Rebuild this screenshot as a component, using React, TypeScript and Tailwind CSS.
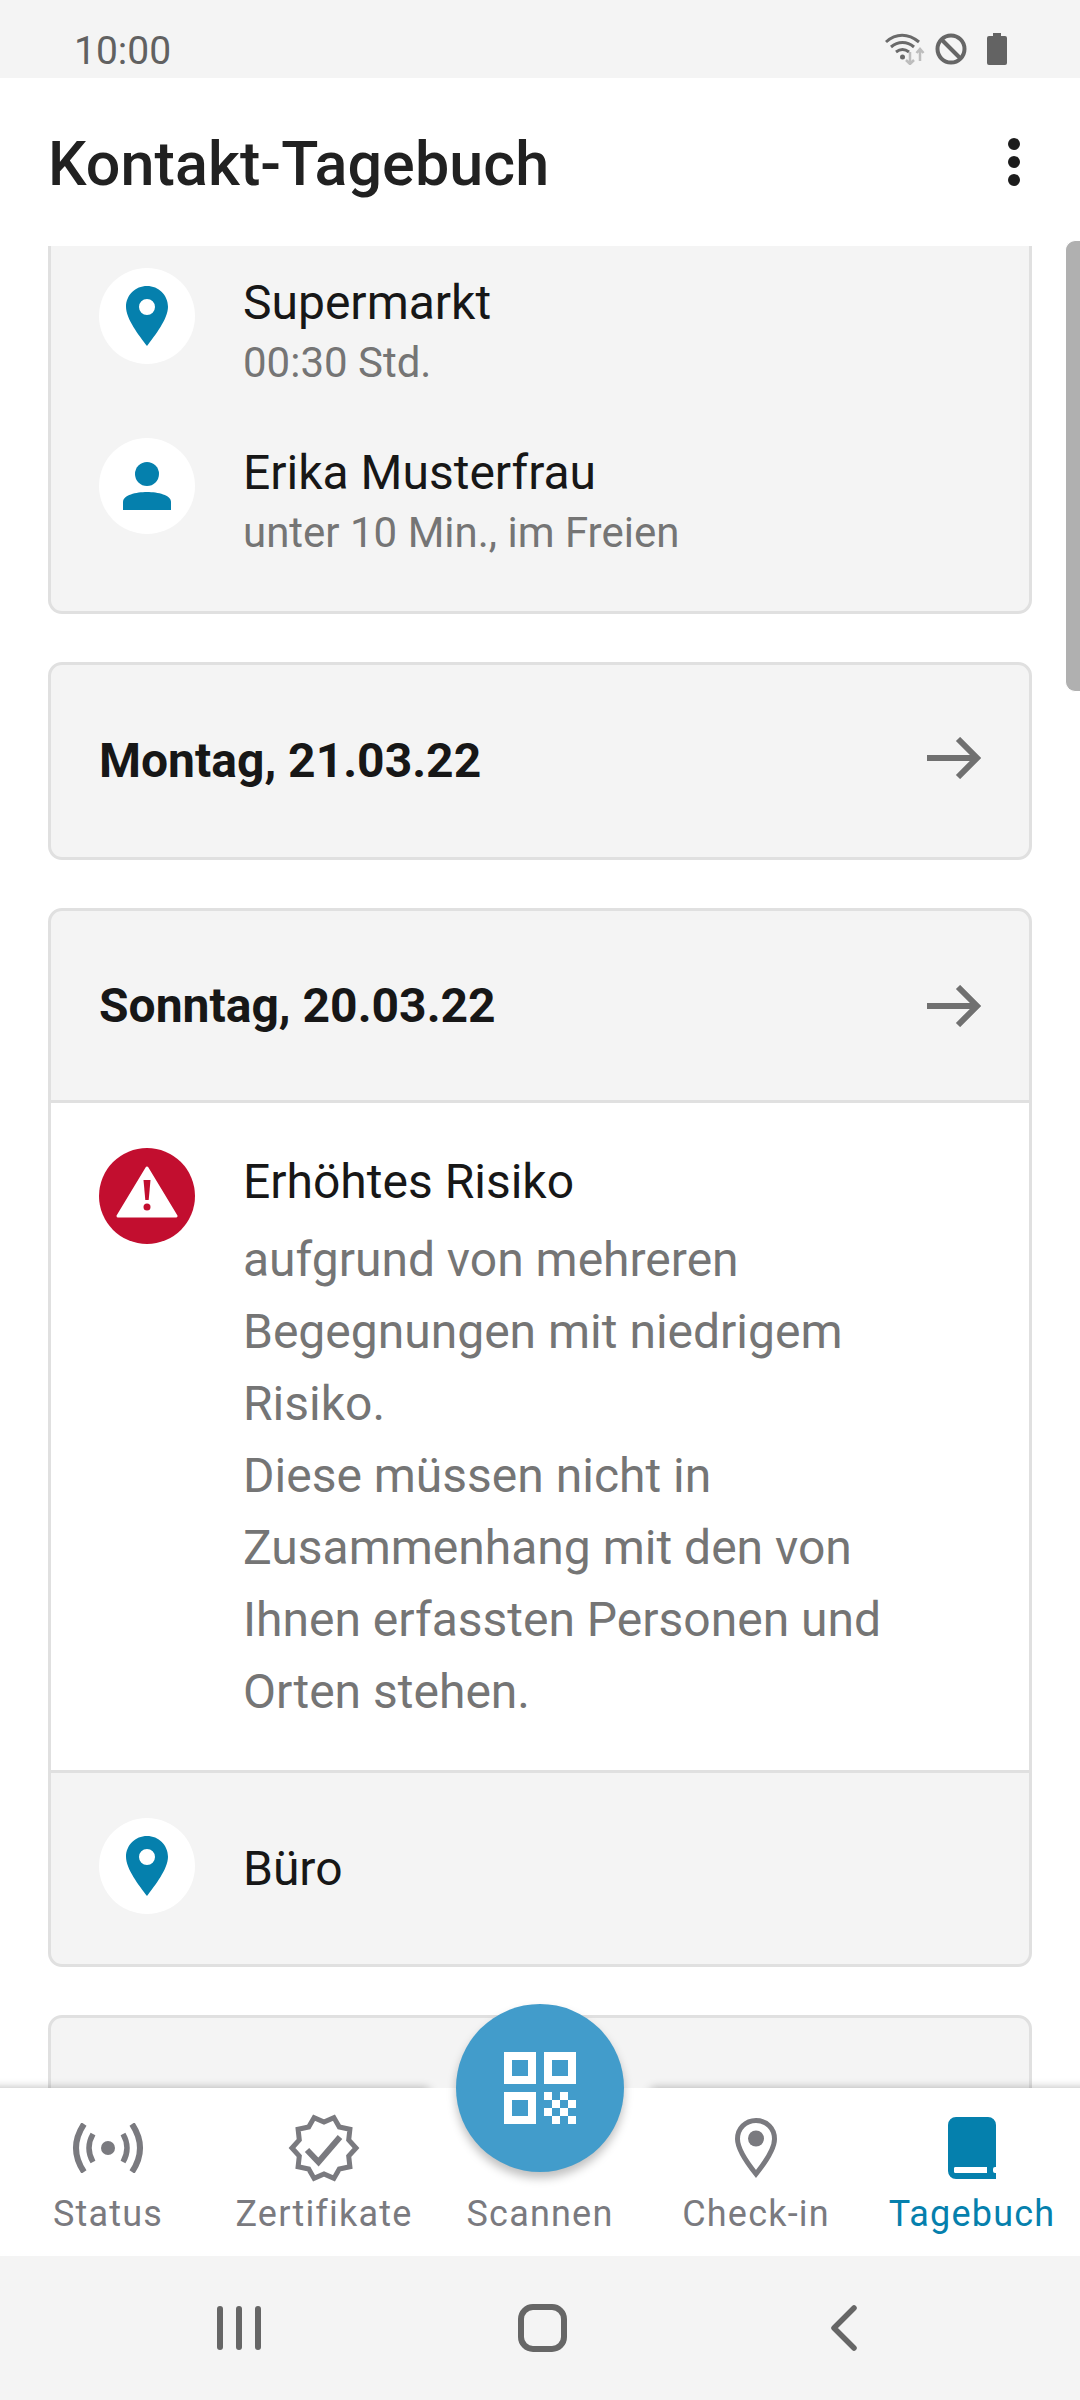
function Pin({ className = "" }: { className?: string }) {
  return (
    <svg viewBox="0 0 42 60" className={className}>
      <path fill="#0580ad" fillRule="evenodd" d="M21 0C9.400 0 0 9.200 0 20.800 0 33 13 49.500 21 60c8-10.500 21-27 21-39.200C42 9.200 32.600 0 21 0Zm0 13a8 8 0 1 1 0 16 8 8 0 0 1 0-16Z" />
    </svg>
  );
}

function Circle({ children, bg = "bg-white" }: { children: React.ReactNode; bg?: string }) {
  return <div className={`flex h-[96px] w-[96px] shrink-0 items-center justify-center rounded-full ${bg}`}>{children}</div>;
}

function Person() {
  return (
    <svg viewBox="0 0 48 48" className="h-[48px] w-[48px]">
      <circle cx="24" cy="12" r="12" fill="#0580ad" />
      <path fill="#0580ad" d="M0 48v-8c0-7 13-10 24-10s24 3 24 10v8Z" />
    </svg>
  );
}

function Arrow({ className = "" }: { className?: string }) {
  return (
    <svg viewBox="0 0 54 42" className={`h-[42px] w-[54px] ${className}`} fill="none" stroke="#707070" strokeWidth="6">
      <path d="M0 21h50M31 2l19 19-19 19" />
    </svg>
  );
}

function DayHeader({ title, h, arrowClass }: { title: string; h: string; arrowClass?: string }) {
  return (
    <div className={`flex items-center justify-between pl-[48px] pr-[48px] ${h}`}>
      <span className="text-[48px] font-bold text-[#171717]">{title}</span>
      <Arrow className={arrowClass} />
    </div>
  );
}

function Nav({ label, active, children }: { label: string; active?: boolean; children?: React.ReactNode }) {
  return (
    <div className="flex flex-1 flex-col items-center">
      <div className="flex h-[72px] w-[72px] items-center justify-center">{children}</div>
      <span className={`mt-[8px] text-[36px] leading-[44px] tracking-[1.2px] ${active ? "text-[#0580ad]" : "text-[#7a7a7f]"}`}>{label}</span>
    </div>
  );
}

const qrCells = [
  [0, 0], [2, 0], [1, 1], [3, 1], [0, 2], [2, 2], [1, 3], [3, 3],
];

const badgePoints = Array.from({ length: 20 }, (_, i) => {
  const a = (i * Math.PI) / 10;
  const r = i % 2 === 0 ? 32 : 26;
  return `${(36 + r * Math.cos(a)).toFixed(1)},${(34 + r * Math.sin(a)).toFixed(1)}`;
}).join(" ");

function Row({ icon, title, sub, className = "" }: { icon: React.ReactNode; title: string; sub: string; className?: string }) {
  return (
    <div className={`flex items-start gap-[48px] ${className}`}>
      <Circle>{icon}</Circle>
      <div className="mt-[5px]">
        <div className="text-[48px] leading-[60px] text-[#171717]">{title}</div>
        <div className="text-[42px] leading-[60px] text-[#757575]">{sub}</div>
      </div>
    </div>
  );
}

function NavShadow({ side }: { side: "left" | "right" }) {
  return (
    <div className={`absolute top-[2072px] h-[16px] w-[450px] overflow-hidden ${side === "left" ? "left-0" : "left-[630px]"}`}>
      <div className={`mt-[16px] h-[10px] rounded-full bg-black/30 shadow-[0_0_10px_rgba(0,0,0,0.3)] ${side === "left" ? "-ml-[30px] w-[460px]" : "ml-[20px] w-[470px]"}`} />
    </div>
  );
}

export default function App() {
  return (
    <div className="relative flex h-[2400px] w-[1080px] flex-col overflow-hidden bg-white font-['Roboto',sans-serif]">
      {/* status bar */}
      <div className="flex h-[78px] shrink-0 items-center justify-between bg-[#f4f4f4] pl-[74px] pr-[73px] pt-[20px]">
        <span className="pt-[4px] text-[39px] leading-none text-[#616161]">10:00</span>
        <div className="flex items-center">
          <svg viewBox="0 0 40 32" className="h-[32px] w-[40px]" fill="none">
            <path stroke="#6a6a6a" strokeWidth="3" d="M1 9c10-9 22-9 33 0M6 14c7-6 16-6 23 0M11 19c4-3 9-3 13 0" />
            <circle cx="17.500" cy="24" r="2.500" fill="#6a6a6a" />
            <path stroke="#bdbdbd" strokeWidth="2.500" d="M25 19v12M21 27l4 4 4-4M35 28V16M31.500 20l3.500-4 3.500 4" />
          </svg>
          <svg viewBox="0 0 32 32" className="ml-[10px] h-[32px] w-[32px]" fill="none" stroke="#666" strokeWidth="4">
            <circle cx="16" cy="16" r="13.500" />
            <path d="M6.500 6.500l19 19" />
          </svg>
          <svg viewBox="0 0 20 32" className="ml-[20px] h-[32px] w-[20px]">
            <path fill="#636363" d="M6 0h8v3h4a2 2 0 0 1 2 2v25a2 2 0 0 1-2 2H2a2 2 0 0 1-2-2V5a2 2 0 0 1 2-2h4Z" />
          </svg>
        </div>
      </div>

      {/* app bar */}
      <div className="flex h-[168px] shrink-0 items-center justify-between bg-white pl-[48px] pr-[60px]">
        <span className="pt-[4px] text-[61px] font-medium leading-none tracking-[0.1px] text-[#212121]">Kontakt-Tagebuch</span>
        <div className="flex flex-col gap-[6px]">
          <div className="h-[12px] w-[12px] rounded-full bg-[#1c1c1c]" />
          <div className="h-[12px] w-[12px] rounded-full bg-[#1c1c1c]" />
          <div className="h-[12px] w-[12px] rounded-full bg-[#1c1c1c]" />
        </div>
      </div>

      {/* scrolling list */}
      <div className="flex min-h-0 flex-1 flex-col gap-[48px] overflow-hidden px-[48px]">
        <div className="h-[368px] shrink-0 rounded-b-[14px] border-x-[3px] border-b-[3px] border-[#e0e0e0] bg-[#f4f4f4] px-[48px] pt-[22px]">
          <Row icon={<Pin className="h-[60px] w-[42px]" />} title="Supermarkt" sub="00:30 Std." />
          <Row className="mt-[45px]" icon={<Person />} title="Erika Musterfrau" sub="unter 10 Min., im Freien" />
        </div>

        <div className="shrink-0 rounded-[14px] border-[3px] border-[#e0e0e0] bg-[#f4f4f4]">
          <DayHeader title="Montag, 21.03.22" h="h-[192px]" arrowClass="mb-[7px]" />
        </div>

        <div className="shrink-0 overflow-hidden rounded-[14px] border-[3px] border-[#e0e0e0] bg-[#f4f4f4]">
          <DayHeader title="Sonntag, 20.03.22" h="h-[189px]" />
          <div className="flex h-[673px] items-start gap-[48px] border-y-[3px] border-[#e0e0e0] bg-white px-[48px] pt-[45px]">
            <Circle bg="bg-[#c20e2f]">
              <svg viewBox="0 0 62 52" className="-mt-[8px] h-[52px] w-[62px]">
                <path fill="#fff" stroke="#fff" strokeWidth="3" strokeLinejoin="round" d="M31 2 60 50H2Z" />
                <path fill="#c20e2f" d="M27.500 14h7l-1.800 20h-3.400Z" />
                <circle cx="31" cy="41" r="3.500" fill="#c20e2f" />
              </svg>
            </Circle>
            <div className="mt-[4px]">
              <div className="text-[48px] leading-[60px] text-[#171717]">Erhöhtes Risiko</div>
              <div className="mt-[12px] w-[680px] text-[48px] leading-[72px] text-[#757575]">
                aufgrund von mehreren<br />Begegnungen mit niedrigem<br />Risiko.<br />Diese müssen nicht in<br />Zusammenhang mit den von<br />Ihnen erfassten Personen und<br />Orten stehen.
              </div>
            </div>
          </div>
          <div className="flex h-[191px] items-center gap-[48px] px-[48px]">
            <div className="-mt-[5px]">
              <Circle><Pin className="h-[60px] w-[42px]" /></Circle>
            </div>
            <span className="text-[48px] text-[#171717]">Büro</span>
          </div>
        </div>

        <div className="h-[200px] shrink-0 rounded-[14px] border-[3px] border-[#e0e0e0] bg-[#f4f4f4]" />
      </div>

      {/* bottom navigation */}
      <div className="flex h-[168px] shrink-0 bg-white pt-[24px]">
        <Nav label="Status">
          <svg viewBox="0 0 72 50" className="h-[50px] w-[72px]" fill="none" stroke="#7a7a7f">
            <circle cx="36" cy="25" r="7" fill="#7a7a7f" stroke="none" />
            <path strokeWidth="6" d="M12 1Q-4 25 12 49M60 1Q76 25 60 49" />
            <path strokeWidth="5.500" d="M21 11Q13 25 21 39M51 11Q59 25 51 39" />
          </svg>
        </Nav>
        <Nav label="Zertifikate">
          <svg viewBox="0 0 72 68" className="h-[68px] w-[72px]" fill="none" stroke="#7a7a7f" strokeWidth="5">
            <polygon points={badgePoints} />
            <path strokeWidth="6" d="M19 36l11.500 12L52 23" />
          </svg>
        </Nav>
        <Nav label="Scannen" />
        <Nav label="Check-in">
          <svg viewBox="0 0 42 60" className="h-[60px] w-[42px]">
            <path fill="none" stroke="#7a7a7f" strokeWidth="5" d="M21 2.500C10.500 2.500 2.500 10.500 2.500 21c0 10.500 10.500 25 18.500 35 8-10 18.500-24.500 18.500-35C39.500 10.500 31.500 2.500 21 2.500Z" />
            <circle cx="21" cy="20.500" r="8" fill="#7a7a7f" />
          </svg>
        </Nav>
        <Nav label="Tagebuch" active>
          <svg viewBox="0 0 48 62" className="h-[62px] w-[48px]">
            <path fill="#0580ad" fillRule="evenodd" d="M8 0h32a8 8 0 0 1 8 8v42h-1a2 2 0 0 0-2 2v2a2 2 0 0 0 2 2h1v6H8a8 8 0 0 1-8-8V8a8 8 0 0 1 8-8Zm-1 50a1.500 1.500 0 0 0-1 1.500v3a1.500 1.500 0 0 0 1 1.500h32v-6Z" />
          </svg>
        </Nav>
      </div>

      {/* system navigation */}
      <div className="flex h-[144px] shrink-0 items-center bg-[#f4f4f4] pl-[217px]">
        <div className="flex gap-[13px]">
          <div className="h-[44px] w-[6px] rounded-full bg-[#666]" />
          <div className="h-[44px] w-[6px] rounded-full bg-[#666]" />
          <div className="h-[44px] w-[6px] rounded-full bg-[#666]" />
        </div>
        <div className="ml-[257px] h-[48px] w-[49px] rounded-[15px] border-[6px] border-[#666]" />
        <svg viewBox="0 0 26 46" className="ml-[264px] h-[46px] w-[26px]" fill="none" stroke="#666" strokeWidth="5.500" strokeLinecap="round" strokeLinejoin="round">
          <path d="M23 3 3 23l20 20" />
        </svg>
      </div>

      {/* overlays */}
      <NavShadow side="left" />
      <NavShadow side="right" />
      <div className="absolute left-[456px] top-[2004px] flex h-[168px] w-[168px] items-center justify-center rounded-full bg-[#429ccb] shadow-[0_6px_10px_rgba(0,0,0,0.25)]">
        <svg viewBox="0 0 72 72" className="h-[72px] w-[72px]">
          <path fill="#fff" fillRule="evenodd" d="M0 0h32v32H0Zm8 8v16h16V8ZM40 0h32v32H40Zm8 8v16h16V8ZM0 40h32v32H0Zm8 8v16h16V48Z" />
          {qrCells.map(([x, y]) => (
            <rect key={`${x}-${y}`} x={40 + x * 8} y={40 + y * 8} width="8" height="8" fill="#fff" />
          ))}
        </svg>
      </div>
      <div className="absolute left-[1065px] top-[240px] h-[452px] w-[15px] rounded-l-[10px] border-y border-l border-white bg-[#b0b0b0]" />
    </div>
  );
}
